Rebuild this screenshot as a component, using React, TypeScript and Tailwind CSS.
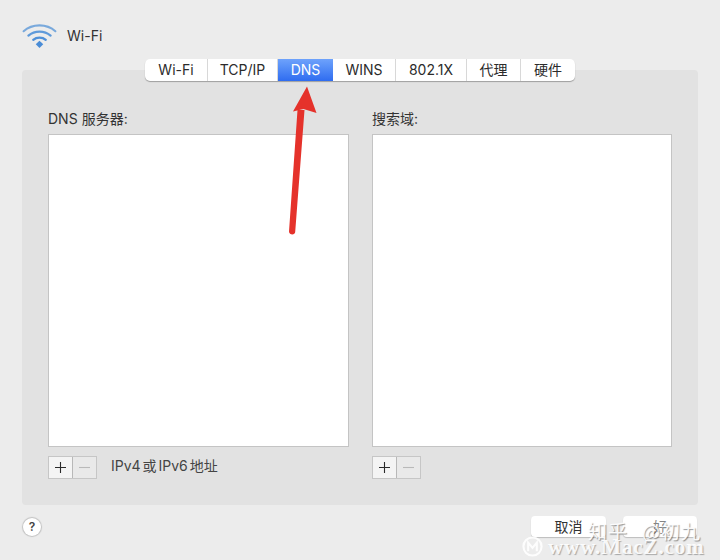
import React from "react";

const font = { fontFamily: '"Inter", "Liberation Sans", "Noto Sans CJK SC", sans-serif' };

function Tab({ label, w, active, last }: { label: string; w: string; active?: boolean; last?: boolean }) {
  return (
    <div
      className={`${w} flex items-center justify-center text-[14px] leading-none ${
        active
          ? "bg-gradient-to-b from-[#6ea2fb] to-[#2f6cf0] text-white"
          : `text-[#2b2b2b] ${last ? "" : "border-r border-[#d8d8d8]"}`
      }`}
    >
      {label}
    </div>
  );
}

function AddRemove() {
  return (
    <div className="flex h-[23px] w-[49px] border border-[#c6c6c6]">
      <div className="flex w-[24px] items-center justify-center border-r border-[#b8b8b8] bg-[#f4f4f4]">
        <svg width="13" height="13" viewBox="0 0 13 13">
          <path d="M6.5 1v11M1 6.5h11" stroke="#2a2a2a" strokeWidth="1.1" />
        </svg>
      </div>
      <div className="flex flex-1 items-center justify-center bg-[#e9e9e9]">
        <svg width="13" height="13" viewBox="0 0 13 13">
          <path d="M1 6.5h11" stroke="#b9b9b9" strokeWidth="1.1" />
        </svg>
      </div>
    </div>
  );
}

export default function App() {
  return (
    <div
      className="relative flex h-[560px] w-[720px] flex-col overflow-hidden bg-[#ececec] px-[22px] pt-[23px] text-[#333]"
      style={font}
    >
      <div className="flex h-[26px] items-center gap-[10px]">
        <svg width="35" height="26" viewBox="0 0 35 27" fill="none" strokeLinecap="round">
          <path d="M1 8.5C10 0.5 25 0.5 34 8.5" stroke="#79a9dc" strokeWidth="2.2" />
          <path d="M6 13C12.5 7.5 22.5 7.5 29 13" stroke="#5f9ada" strokeWidth="2.4" />
          <path d="M11 17.5C14.5 14.5 20.5 14.5 24 17.5" stroke="#4f90d8" strokeWidth="2.4" />
          <path d="M13.6 22L17.5 18.5L21.4 22L17.5 26Z" fill="#4a8cd6" />
        </svg>
        <span className="-mt-[2px] text-[14px] text-[#333]">Wi-Fi</span>
      </div>

      <div className="mt-[21px] flex h-[435px] flex-col rounded-[4px] bg-[#e2e2e2] px-[26px]">
        <div className="-mt-[11px] flex h-[22px] w-[430px] self-center overflow-hidden rounded-[5px] bg-white shadow-[0_1px_1px_rgba(0,0,0,0.3)]">
          <Tab label="Wi-Fi" w="w-[63px]" />
          <Tab label="TCP/IP" w="w-[70px]" />
          <Tab label="DNS" w="w-[55px]" active />
          <Tab label="WINS" w="w-[63px]" />
          <Tab label="802.1X" w="w-[71px]" />
          <Tab label="代理" w="w-[54px]" />
          <Tab label="硬件" w="w-[54px]" last />
        </div>

        <div className="mt-[28px] flex gap-[23px]">
          <div className="flex w-[301px] flex-col">
            <div className="h-[25px] pt-[1px] text-[14px] leading-[18px] text-[#333]">
              DNS<span className="ml-[4px]">服务器:</span>
            </div>
            <div className="h-[313px] border border-[#c4c4c4] bg-white" />
            <div className="mt-[9px] flex items-center gap-[14px]">
              <AddRemove />
              <span className="-mt-[5px] text-[14px] text-[#444] [word-spacing:-2px]">IPv4 或 IPv6 地址</span>
            </div>
          </div>
          <div className="flex w-[300px] flex-col">
            <div className="h-[25px] pt-[1px] text-[14px] leading-[18px] text-[#333]">搜索域:</div>
            <div className="h-[313px] border border-[#c4c4c4] bg-white" />
            <div className="mt-[9px] flex items-center">
              <AddRemove />
            </div>
          </div>
        </div>
      </div>

      <div className="mt-[13px] flex items-start justify-between pl-[1px]">
        <div className="flex h-[18px] w-[18px] items-center justify-center rounded-full bg-white text-[12px] font-semibold text-[#444] shadow-[0_0_1px_1px_rgba(0,0,0,0.18)]">
          ?
        </div>
        <div className="mt-[-2px] flex gap-[17px] pr-[1px]">
          <div className="flex h-[21px] w-[75px] items-center justify-center rounded-[4px] bg-white text-[14px] text-[#333] shadow-[0_1px_1px_rgba(0,0,0,0.2)]">
            <span>取消</span>
          </div>
          <div className="flex h-[21px] w-[74px] items-center justify-center rounded-[4px] bg-white text-[14px] text-[#333] shadow-[0_1px_1px_rgba(0,0,0,0.2)]">
            <span className="-mt-[1px] opacity-60">好</span>
          </div>
        </div>
      </div>

      <svg className="absolute left-0 top-0" width="720" height="560" fill="none">
        <path d="M289 231.5C289 235 295 235.5 295.2 232L304.5 110L297.5 110Z" fill="#e5322b" />
        <path d="M307 86.5L316.5 113L303.5 109L293 111.5Z" fill="#e5322b" />
      </svg>

      <div
        className="absolute left-[588px] top-[519px] flex h-[22px] w-[116px] items-center text-[19px] leading-none text-white/90 [text-shadow:1px_1px_1px_rgba(0,0,0,0.4)]"
        style={{ fontFamily: '"Noto Sans CJK SC", sans-serif' }}
      >
        <span className="mr-[14px] tracking-[1px]">知乎</span>
        <span className="tracking-[1px]">@初九</span>
      </div>
      <div className="absolute left-[522px] top-[534px] flex items-center gap-[5px]">
        <svg width="21" height="21" viewBox="0 0 22 22" fill="none" stroke="#ffffff" strokeOpacity="0.9" strokeWidth="2.2">
          <circle cx="11" cy="11" r="9.5" />
          <path d="M6.5 16V7L11 12.5L15.5 7V16" />
        </svg>
        <span
          className="mt-[3px] text-[21px] font-bold leading-none tracking-[0.9px] text-white/90 [text-shadow:1px_1px_1px_rgba(0,0,0,0.3)]"
          style={{ fontFamily: '"Liberation Serif", serif' }}
        >
          www.MacZ.com
        </span>
      </div>
    </div>
  );
}
